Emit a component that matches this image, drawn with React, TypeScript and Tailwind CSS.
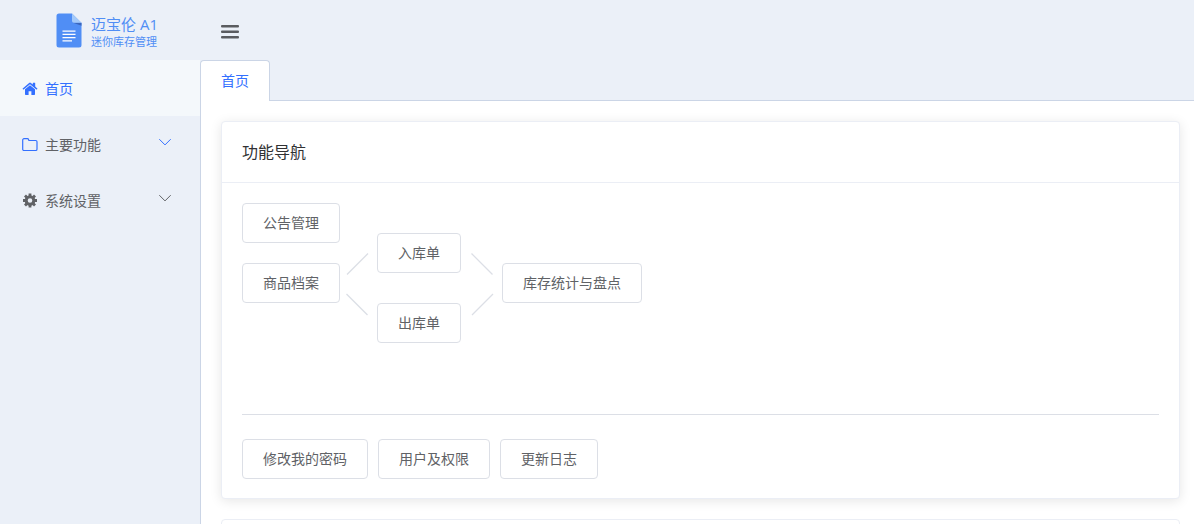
import React from 'react';

const HomeIcon = () => (
  <svg className="h-4 w-4" viewBox="0 0 16 16" fill="currentColor" aria-hidden="true">
    <path d="M3 9.3 8 5.2l5 4.1v4.9a.7.7 0 0 1-.7.7H9.4v-3.7H6.6v3.7H3.7a.7.7 0 0 1-.7-.7z" />
    <path d="M15.3 8.4 13.2 6.6V3a.35.35 0 0 0-.35-.35h-1.7a.35.35 0 0 0-.35.35v1.6L8.9 3a1.4 1.4 0 0 0-1.8 0L.7 8.4a.35.35 0 0 0 0 .5l.5.6c.1.15.35.15.5 0L8 4.3l6.3 5.2c.15.15.4.15.5 0l.5-.6a.35.35 0 0 0 0-.5z" />
  </svg>
);

const FolderIcon = () => (
  <svg className="h-4 w-4" viewBox="0 0 16 16" fill="none" stroke="currentColor" strokeLinejoin="round" aria-hidden="true">
    <path d="M.7 4A1.3 1.3 0 0 1 2 2.7h3.4a1.3 1.3 0 0 1 1.2.9l.3.9h6.8A1.3 1.3 0 0 1 15 5.8v7.4a1.3 1.3 0 0 1-1.3 1.3H2A1.3 1.3 0 0 1 .7 13.2z" strokeWidth="1.2" />
  </svg>
);

const GearIcon = () => (
  <svg className="h-4 w-4" viewBox="0 0 16 16" fill="none" stroke="currentColor" aria-hidden="true">
    <circle cx="8" cy="8.5" r="3.8" strokeWidth="3" />
    <g strokeWidth="2.8">
      <path d="M8 1.5V4M8 13v2.5M1 8.5h2.5M12.5 8.5H15" />
      <path d="m3 3.5 1.9 1.9M11.1 11.6l1.9 1.9M3 13.5l1.9-1.9M11.1 5.4 13 3.5" />
    </g>
  </svg>
);

const Chevron = () => (
  <svg className="h-3 w-3" viewBox="0 0 12 12" fill="none" stroke="currentColor" aria-hidden="true">
    <path d="m.3 3.2 5.7 5.7 5.7-5.7" />
  </svg>
);

const Logo = () => (
  <svg className="h-[35px] w-[27px]" viewBox="0 0 27 35" aria-hidden="true">
    <path d="M3 .5h13l9.5 9.5v22a2.5 2.5 0 0 1-2.5 2.5H3A2.5 2.5 0 0 1 .5 32V3A2.5 2.5 0 0 1 3 .5z" fill="#508ef5" />
    <path d="m17 9.800 8.500 3V9.800z" fill="#3a66bd" />
    <path d="M16 .5V8a1.8 1.8 0 0 0 1.8 1.8h7.7z" fill="#a3c9f9" />
    <path d="M6.5 18.200h13M6.500 21.400h13M6.500 24.600h13M6.500 27.800h9.500" stroke="#fff" strokeWidth="1.3" />
  </svg>
);

const NavButton = ({ children }: { children: React.ReactNode }) => (
  <button
    type="button"
    className="h-10 rounded border border-[#dcdfe6] bg-white px-5 text-sm whitespace-nowrap hover:border-[#c6d8ff] hover:bg-[#ecf2ff] hover:text-[#3370ff]"
  >
    {children}
  </button>
);

const App: React.FC = () => {
  return (
    <div className="flex h-screen overflow-hidden bg-[#ebf0f8] font-['Open_Sans','Noto_Sans_CJK_SC',sans-serif] text-sm text-[#606266]">
      <aside className="w-[200px] shrink-0">
        <div className="flex h-[60px] items-center gap-2 pl-14 text-[#508ef5]">
          <Logo />
          <div className="pt-1">
            <div className="text-[15px] leading-5">迈宝伦 A1</div>
            <div className="text-[11px] leading-4">迷你库存管理</div>
          </div>
        </div>
        <nav>
          <a href="#home" className="flex h-14 items-center gap-[7px] bg-[#f4f8fb] px-[22px] text-[#3370ff]">
            <HomeIcon />
            <span className="flex-1 pt-0.5">首页</span>
          </a>
          <a href="#main" className="flex h-14 items-center gap-[7px] pr-[29px] pl-[22px]">
            <span className="text-[#3370ff]"><FolderIcon /></span>
            <span className="flex-1 pt-0.5">主要功能</span>
            <span className="pb-1 text-[#3370ff]"><Chevron /></span>
          </a>
          <a href="#settings" className="flex h-14 items-center gap-[7px] pr-[29px] pl-[22px]">
            <GearIcon />
            <span className="flex-1 pt-0.5">系统设置</span>
            <span className="pb-1"><Chevron /></span>
          </a>
        </nav>
      </aside>

      <div className="flex min-w-0 flex-1 flex-col">
        <header className="flex h-[60px] shrink-0 items-center px-5 pt-1">
          <button type="button" aria-label="菜单" className="text-[#5a5c60]">
            <svg className="h-5 w-5" viewBox="0 0 20 20" fill="currentColor">
              <rect x="1" y="3" width="18" height="2.6" rx="1" />
              <rect x="1" y="8.5" width="18" height="2.6" rx="1" />
              <rect x="1" y="14" width="18" height="2.6" rx="1" />
            </svg>
          </button>
        </header>

        <div className="flex shrink-0">
          <button type="button" className="h-[41px] rounded-t border border-b-0 border-[#cbd5e6] bg-white px-5 text-[#3370ff]">
            首页
          </button>
          <div className="flex-1 border-b border-[#cbd5e6]" />
        </div>

        <main className="min-h-0 flex-1 overflow-hidden border-l border-[#cbd5e6] bg-white pt-5 pr-3.5 pl-5">
          <section className="rounded border border-[#ebeef5] bg-white shadow-[0_2px_12px_0_rgba(0,0,0,0.1)]">
            <h2 className="flex h-[61px] items-center border-b border-[#ebeef5] px-5 text-base text-[#303133]">功能导航</h2>
            <div className="px-5 pt-5 pb-[19px]">
              <div className="flex min-h-[187px] items-start">
                <div className="flex flex-col gap-5">
                  <NavButton>公告管理</NavButton>
                  <NavButton>商品档案</NavButton>
                </div>
                <svg className="h-[140px] w-[37px] shrink-0" viewBox="0 0 37 140" stroke="#dcdfe6" strokeWidth="1.3" aria-hidden="true">
                  <path d="m7 71.5 21-21M6.5 91l21 21" />
                </svg>
                <div className="flex flex-col gap-[30px] pt-[30px]">
                  <NavButton>入库单</NavButton>
                  <NavButton>出库单</NavButton>
                </div>
                <svg className="h-[140px] w-[41px] shrink-0" viewBox="0 0 41 140" stroke="#dcdfe6" strokeWidth="1.3" aria-hidden="true">
                  <path d="m10.5 50.5 21 21M11 112l21-21" />
                </svg>
                <div className="pt-[60px]">
                  <NavButton>库存统计与盘点</NavButton>
                </div>
              </div>
              <hr className="my-6 border-[#dcdfe6]" />
              <div className="flex gap-2.5">
                <NavButton>修改我的密码</NavButton>
                <NavButton>用户及权限</NavButton>
                <NavButton>更新日志</NavButton>
              </div>
            </div>
          </section>
          <section className="mt-5 h-20 rounded border border-[#ebeef5] bg-white" />
        </main>
      </div>
    </div>
  );
};

export default App;
